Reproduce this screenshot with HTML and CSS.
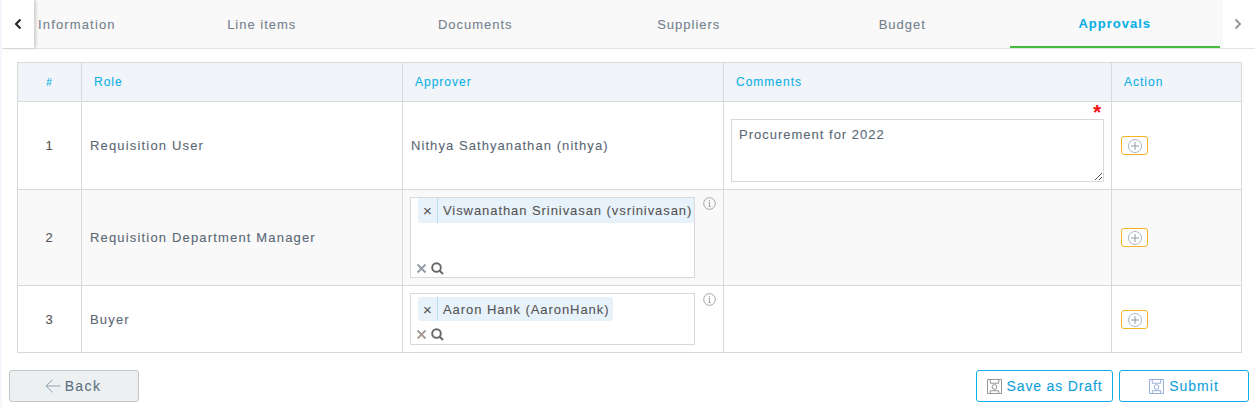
FILE: index.html
```html
<!DOCTYPE html>
<html lang="en">
<head>
<meta charset="utf-8">
<title>Approvals</title>
<link rel="stylesheet" href="styles.css">
</head>
<body>
<div class="page">
  <nav class="tabs">
    <button class="arrow arrow-left" aria-label="Previous">
      <svg width="10" height="14" viewBox="0 0 10 14"><path d="M7.5 2.5 3 7l4.500 4.500" fill="none" stroke="#222" stroke-width="2"/></svg>
    </button>
    <div class="tab-list">
      <a class="tab tab-first">Information</a>
      <a class="tab">Line items</a>
      <a class="tab">Documents</a>
      <a class="tab">Suppliers</a>
      <a class="tab">Budget</a>
      <a class="tab tab-active">Approvals</a>
    </div>
    <button class="arrow arrow-right" aria-label="Next">
      <svg width="10" height="14" viewBox="0 0 10 14"><path d="M2.500 2.500 7 7l-4.500 4.500" fill="none" stroke="#999" stroke-width="2"/></svg>
    </button>
  </nav>

  <div class="table-wrap">
    <table class="grid">
      <colgroup>
        <col class="c-num"><col class="c-role"><col class="c-appr"><col class="c-comm"><col class="c-act">
      </colgroup>
      <thead>
        <tr><th class="center">#</th><th>Role</th><th>Approver</th><th>Comments</th><th>Action</th></tr>
      </thead>
      <tbody>
        <tr class="row-a">
          <td class="center">1</td>
          <td class="role">Requisition User</td>
          <td class="person">Nithya Sathyanathan (nithya)</td>
          <td class="comment-cell">
            <span class="req">*</span>
            <div class="textarea">Procurement for 2022
              <svg class="grip" width="9" height="9" viewBox="0 0 9 9"><path d="M1 8 8 1M5 8l3-3" stroke="#555" stroke-width="1"/></svg>
            </div>
          </td>
          <td><button class="add" aria-label="Add"><svg width="16" height="16" viewBox="0 0 16 16"><circle cx="8" cy="8" r="6.500" fill="none" stroke="#a9b4c0"/><path d="M8 4v8M4 8h8" stroke="#8d99a6"/></svg></button></td>
        </tr>
        <tr class="row-b">
          <td class="center">2</td>
          <td class="role">Requisition Department Manager</td>
          <td class="picker-cell">
            <div class="picker-row">
              <div class="picker picker-tall">
                <div class="chip chip-wide"><span class="chip-x">×</span><span class="chip-text">Viswanathan Srinivasan (vsrinivasan)</span></div>
                <div class="tools">
                  <svg width="11" height="11" viewBox="0 0 11 11"><path d="M1.500 1.500l8 8M9.500 1.500l-8 8" stroke="#8f9aa3" stroke-width="1.800"/></svg>
                  <svg width="13" height="13" viewBox="0 0 13 13"><circle cx="5.500" cy="5.500" r="4.300" fill="none" stroke="#666" stroke-width="1.900"/><path d="M8.500 8.500 12 12" stroke="#666" stroke-width="2"/></svg>
                </div>
              </div>
              <svg class="info" width="13" height="13" viewBox="0 0 13 13"><circle cx="6.500" cy="6.500" r="5.800" fill="none" stroke="#a5a5a5"/><path d="M6.500 5.500v4M5.500 9.500h2M5.500 5.500h1M6.500 3v1.200" fill="none" stroke="#a0a0a0"/></svg>
            </div>
          </td>
          <td></td>
          <td><button class="add" aria-label="Add"><svg width="16" height="16" viewBox="0 0 16 16"><circle cx="8" cy="8" r="6.500" fill="none" stroke="#a9b4c0"/><path d="M8 4v8M4 8h8" stroke="#8d99a6"/></svg></button></td>
        </tr>
        <tr class="row-c">
          <td class="center">3</td>
          <td class="role">Buyer</td>
          <td class="picker-cell">
            <div class="picker-row">
              <div class="picker picker-short">
                <div class="chip"><span class="chip-x">×</span><span class="chip-text">Aaron Hank (AaronHank)</span></div>
                <div class="tools">
                  <svg width="11" height="11" viewBox="0 0 11 11"><path d="M1.500 1.500l8 8M9.500 1.500l-8 8" stroke="#a89c94" stroke-width="1.800"/></svg>
                  <svg width="13" height="13" viewBox="0 0 13 13"><circle cx="5.500" cy="5.500" r="4.300" fill="none" stroke="#666" stroke-width="1.900"/><path d="M8.500 8.500 12 12" stroke="#666" stroke-width="2"/></svg>
                </div>
              </div>
              <svg class="info" width="13" height="13" viewBox="0 0 13 13"><circle cx="6.500" cy="6.500" r="5.800" fill="none" stroke="#a5a5a5"/><path d="M6.500 5.500v4M5.500 9.500h2M5.500 5.500h1M6.500 3v1.200" fill="none" stroke="#a0a0a0"/></svg>
            </div>
          </td>
          <td></td>
          <td><button class="add" aria-label="Add"><svg width="16" height="16" viewBox="0 0 16 16"><circle cx="8" cy="8" r="6.500" fill="none" stroke="#a9b4c0"/><path d="M8 4v8M4 8h8" stroke="#8d99a6"/></svg></button></td>
        </tr>
      </tbody>
    </table>
  </div>

  <footer class="actions">
    <button class="btn btn-back">
      <svg width="16" height="14" viewBox="0 0 16 14"><path d="M15.500 7H1M7.500 .7 1 7l6.500 6.300" fill="none" stroke="#8fa3b3"/></svg>
      Back
    </button>
    <div class="actions-right">
      <button class="btn btn-primary btn-draft">
        <svg width="15" height="15" viewBox="0 0 16 16"><path d="M.5.500h15v15H.5zM3.500.500v4h9v-4M3.500 15.500v-3h9v3" fill="none" stroke="#8f8f8f"/><circle cx="8" cy="8.500" r="2.500" fill="none" stroke="#8f8f8f"/></svg>
        Save as Draft
      </button>
      <button class="btn btn-primary btn-submit">
        <svg width="15" height="15" viewBox="0 0 16 16"><path d="M.5.500h15v15H.5zM3.500.500v4h9v-4M3.500 15.500v-3h9v3" fill="none" stroke="#8fa8d8"/><circle cx="8" cy="8.500" r="2.500" fill="none" stroke="#8fa8d8"/></svg>
        Submit
      </button>
    </div>
  </footer>
</div>
</body>
</html>
```

FILE: styles.css
```css
* { box-sizing: border-box; }
html, body { margin: 0; padding: 0; background: #fff; }
body {
  font-family: "Liberation Sans", Arial, sans-serif;
  font-size: 13px;
  letter-spacing: 1px;
  color: #5a6875;
  -webkit-text-stroke: .1px;
  height: 407px;
  overflow: hidden;
}
.page { border-left: 2px solid #f4f8fc; height: 407px; }

.tabs { display: flex; height: 49px; border-bottom: 1px solid #e4e4e4; }
.arrow { border: 0; padding: 0; background: #fff; display: flex; align-items: center; justify-content: center; }
.arrow-left { width: 32px; box-shadow: 2px 0 3px rgba(0,0,0,.18); position: relative; z-index: 1; }
.arrow-right { flex: 1; padding-right: 2px; }
.tab-list { display: grid; grid-template-columns: 121px repeat(5, 213.5px); background: #f9f9f9; }
.tab { display: flex; align-items: center; justify-content: center; color: #74818d; padding-top: 1px; }
.tab-first { justify-content: flex-start; padding-left: 4px; letter-spacing: 1.15px; }
.tab-active { color: #0cb0e6; font-weight: 700; border-bottom: 2px solid #46bc3f; margin: 0 3px 0 1px; }

.table-wrap { padding: 13px 12px 0 15px; }
.grid { border-collapse: collapse; table-layout: fixed; width: 1224px; }
.c-num { width: 64px; }
.c-role { width: 321px; }
.c-appr { width: 321px; }
.c-comm { width: 388px; }
.c-act { width: 130px; }
.grid th, .grid td { border: 1px solid #d9d9d9; text-align: left; padding: 0 8px; }
.grid th { height: 39px; background: #f1f4f8; color: #0cb0e6; font-weight: 400; font-size: 12px; padding: 0 12px; }
.grid .center { text-align: center; padding: 0; }
.grid th.center { font-size: 10px; }
.row-a td { height: 88px; background: #fff; }
.row-b td { height: 96px; background: #f9f9f9; }
.row-c td { height: 67px; background: #fff; }
.grid td.center { color: #555; }
.grid td.role { letter-spacing: 1.17px; }
.grid td.person { letter-spacing: 1.07px; }

.grid .comment-cell { position: relative; padding: 0 7px; }
.req { position: absolute; top: 0; right: 10px; color: #f01010; font-size: 20px; line-height: 20px; font-weight: 700; letter-spacing: 0; }
.textarea {
  position: relative;
  height: 63px;
  margin-top: 10px;
  border: 1px solid #d9d9d9;
  background: #fff;
  padding: 7px 7px;
}
.grip { position: absolute; right: 0; bottom: 0; }

.grid .picker-cell { padding: 0 7px; }
.picker-row { display: flex; align-items: flex-start; gap: 8px; }
.picker { width: 285px; border: 1px solid #d9d9d9; background: #fff; padding: 0 0 0 7px; }
.picker-tall { height: 81px; }
.picker-short { height: 52px; padding-top: 3px; }
.chip { display: inline-flex; align-items: stretch; height: 24px; background: #e8f2fb; border-radius: 3px; color: #555; letter-spacing: .93px; }
.chip-wide { display: flex; border-radius: 3px 0 0 3px; height: 25px; overflow: hidden; white-space: nowrap; }
.chip-x { width: 20px; flex: none; border-right: 1px solid #b9dcf5; display: flex; align-items: center; justify-content: center; font-size: 15px; letter-spacing: 0; }
.chip-text { padding: 0 4px 0 5px; display: flex; align-items: center; }
.tools { display: flex; align-items: center; gap: 4px; margin-left: -2px; }
.picker-tall .tools { margin-top: 39px; }
.picker-short .tools { margin-top: 7px; }
.info { flex: none; }

.add { display: block; width: 27px; height: 19px; margin-left: 1px; border: 1px solid #f5b324; border-radius: 3px; background: #fff; padding: 0; }
.add svg { display: block; margin: 1px auto 0; }

.actions { display: flex; justify-content: space-between; padding: 17px 6px 0 7px; }
.actions-right { display: flex; gap: 6px; }
.btn {
  height: 32px;
  border-radius: 3px;
  font-family: inherit;
  font-size: 14px;
  letter-spacing: 1px;
  display: flex;
  align-items: center;
  justify-content: center;
  gap: 5px;
  padding: 0;
}
.btn-back { width: 130px; background: #ecf0f1; border: 1px solid #c3c7c9; color: #5b7083; gap: 4px; letter-spacing: 1.4px; padding-right: 2px; }
.btn-primary { background: #fff; border: 1px solid #0cb0e6; color: #0c9fdc; }
.btn-draft { width: 137px; letter-spacing: .85px; }
.btn-submit { width: 130px; }
```
